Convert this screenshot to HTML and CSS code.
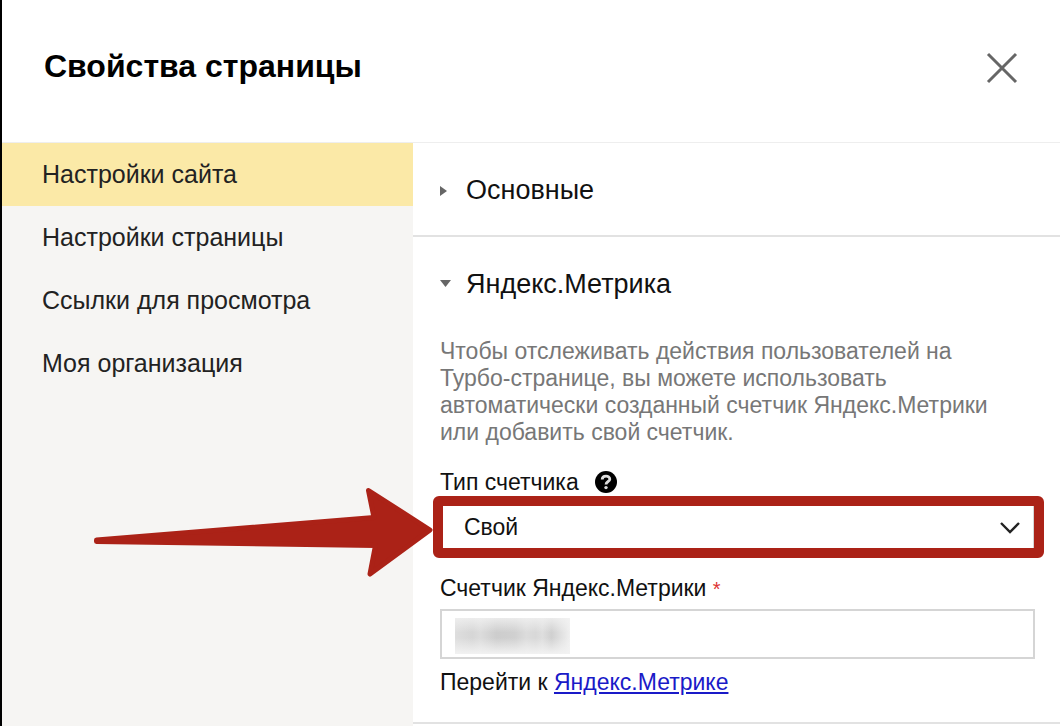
FILE: index.html
```html
<!DOCTYPE html>
<html lang="ru">
<head>
<meta charset="utf-8">
<title>Свойства страницы</title>
<link rel="stylesheet" href="styles.css">
</head>
<body class="page">
<header class="header">
  <h1 class="title">Свойства страницы</h1>
  <button class="close" type="button" aria-label="Закрыть">
    <svg viewBox="0 0 32 32" width="32" height="32"><path d="M2 2L30 30M30 2L2 30" fill="none" stroke="#666" stroke-width="3"/></svg>
  </button>
</header>
<div class="body">
  <nav class="menu">
    <a class="menu-item menu-item-active" href="#site">Настройки сайта</a>
    <a class="menu-item" href="#page">Настройки страницы</a>
    <a class="menu-item" href="#links">Ссылки для просмотра</a>
    <a class="menu-item" href="#org">Моя организация</a>
  </nav>
  <main class="content">
    <section class="section">
      <button class="section-toggle" type="button" aria-expanded="false">
        <svg class="marker" viewBox="0 0 12 12" width="12" height="12"><path d="M0 2L7 7L0 12Z" fill="#666"/></svg>
        <span>Основные</span>
      </button>
    </section>
    <section class="section">
      <button class="section-toggle" type="button" aria-expanded="true">
        <svg class="marker" viewBox="0 0 12 12" width="12" height="12"><path d="M0 2H11L5.5 9Z" fill="#666"/></svg>
        <span>Яндекс.Метрика</span>
      </button>
      <div class="section-body">
        <p class="description">Чтобы отслеживать действия пользователей на Турбо-странице, вы можете использовать автоматически созданный счетчик Яндекс.Метрики или добавить свой счетчик.</p>
        <div class="field">
          <div class="label-row">
            <label for="type">Тип счетчика</label>
            <svg viewBox="0 0 22 22" width="22" height="22"><circle cx="11" cy="11" r="11" fill="#000"/><path d="M7.2 8.6C7.2 4 14.8 4 14.8 8.2C14.8 10.6 11 10.4 11 13.4" fill="none" stroke="#ddd" stroke-width="2.8"/><circle cx="11" cy="16.6" r="1.7" fill="#ddd"/></svg>
          </div>
          <div class="select-wrap">
            <select class="select" id="type"><option>Свой</option></select>
            <svg class="chevron" viewBox="0 0 20 12" width="20" height="12"><path d="M1 1L10 10L19 1" fill="none" stroke="#222" stroke-width="2.4"/></svg>
            <svg class="arrow" viewBox="0 0 342 94" width="342" height="94"><path d="M3.5 55L281 32.5L275.5 5.5L337 45L277 89L282.5 60.5L3.5 56.5Z" fill="#ab2217" stroke="#ab2217" stroke-width="5" stroke-linejoin="round"/></svg>
          </div>
        </div>
        <div class="field">
          <div class="label-row">
            <label for="counter">Счетчик Яндекс.Метрики <span class="required">*</span></label>
          </div>
          <div class="input-wrap">
            <input class="input" id="counter" type="text">
            <span class="masked"></span>
          </div>
        </div>
        <p class="hint">Перейти к <a class="link" href="#metrika">Яндекс.Метрике</a></p>
      </div>
    </section>
  </main>
</div>
</body>
</html>
```
FILE: styles.css
```css
* { box-sizing: border-box; }
.page {
  margin: 0;
  min-height: 100vh;
  display: flex;
  flex-direction: column;
  border-left: 2px solid #000;
  background: #fff;
  color: #111;
  font-family: "Liberation Sans", Arial, sans-serif;
  font-size: 23px;
}
.header {
  display: flex;
  align-items: flex-end;
  justify-content: space-between;
  padding: 48px 42px 58px;
  border-bottom: 1px solid #eee;
}
.title {
  margin: 0;
  font-size: 32px;
  line-height: 36px;
  color: #000;
}
.close, .section-toggle {
  border: 0;
  padding: 0;
  background: none;
  font: inherit;
  color: inherit;
  display: flex;
  align-items: center;
}
.body { flex: 1; display: flex; }
.menu { flex: 0 0 411px; background: #f6f5f3; }
.menu-item {
  display: block;
  padding: 15px 40px 16px;
  font-size: 25px;
  line-height: 32px;
  color: #222;
  text-decoration: none;
}
.menu-item-active { background: #fbe9a7; }
.content { flex: 1; min-width: 0; }
.section {
  padding: 31px 25px 29px 27px;
  border-bottom: 2px solid #e2e2e2;
}
.section:last-child { padding-bottom: 26px; }
.section-toggle {
  gap: 14px;
  font-size: 27px;
  line-height: 32px;
}
.section-body { padding-top: 38px; }
.description {
  margin: 0 0 22px;
  max-width: 572px;
  line-height: 27px;
  color: #777;
}
.label-row {
  display: flex;
  align-items: center;
  gap: 16px;
  line-height: 28px;
  margin-bottom: 7px;
}
.field { margin-bottom: 23px; }
.field + .field { margin-bottom: 9px; }
.required { color: #d33; font-size: 20px; line-height: 20px; }
.select-wrap, .input-wrap { position: relative; }
.select, .input {
  display: block;
  width: 100%;
  height: 48px;
  padding: 0 22px;
  border: 2px solid #d5d5d5;
  border-radius: 0;
  appearance: none;
  background: #fff;
  color: #111;
  font: inherit;
}
.input { height: 50px; }
.chevron {
  position: absolute;
  right: 15px;
  top: 19px;
  pointer-events: none;
}
.select-wrap::after {
  content: "";
  position: absolute;
  inset: -7px -9px -7px -7px;
  border: 10px solid #ab2217;
  border-radius: 6px;
  pointer-events: none;
}
.arrow {
  position: absolute;
  right: 100%;
  top: -18px;
  margin-right: 5px;
  pointer-events: none;
}
.masked {
  position: absolute;
  left: 15px;
  top: 9px;
  width: 115px;
  height: 36px;
  background:
    linear-gradient(to bottom, rgba(242, 242, 242, 0.8), rgba(242, 242, 242, 0) 40%, rgba(242, 242, 242, 0) 55%, #f2f2f2),
    linear-gradient(to right, #dedede, #d6d6d6 15%, #dcdcdc 22%, #cdcdcd 36%, #d0d0d0 52%, #dcdcdc 62%, #d8d8d8 70%, #dedede 76%, #d0d0d0 84%, #f0f0f0);
}
.hint { margin: 0; line-height: 28px; }
.link { color: #1a1ac8; }
```
